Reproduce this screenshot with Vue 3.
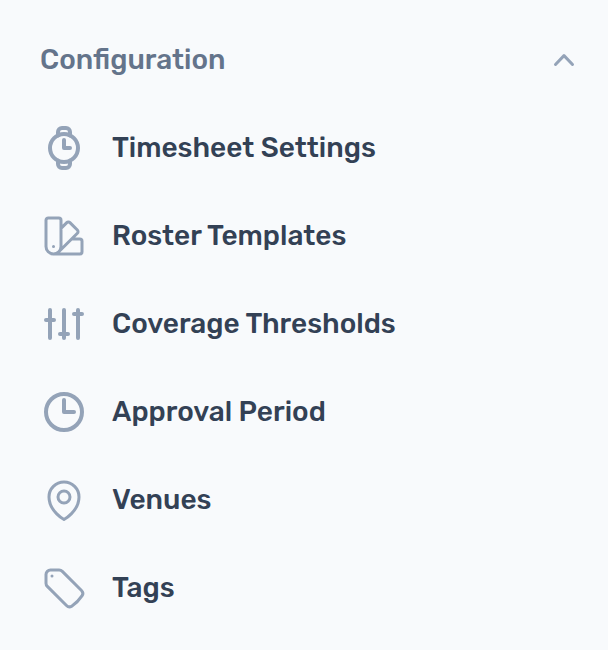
<script setup>
import { ref } from 'vue'

const open = ref(true)

const items = [
  {
    label: 'Timesheet Settings',
    stroke: 2,
    paths: [
      'M19 12a7 7 0 1 1-14 0 7 7 0 0 1 14 0Z',
      'M12 8v4h3',
      'M9 5.7V4a2 2 0 0 1 2-2h2a2 2 0 0 1 2 2v1.7',
      'M9 18.3V20a2 2 0 0 0 2 2h2a2 2 0 0 0 2-2v-1.7',
    ],
  },
  {
    label: 'Roster Templates',
    stroke: 1.5,
    paths: [
      'M4.098 19.902a3.75 3.75 0 0 0 5.304 0l6.401-6.402M6.75 21A3.75 3.75 0 0 1 3 17.25V4.125C3 3.504 3.504 3 4.125 3h5.25c.621 0 1.125.504 1.125 1.125v4.072M6.75 21a3.75 3.75 0 0 0 3.75-3.75V8.197M6.75 21h13.125c.621 0 1.125-.504 1.125-1.125v-5.25c0-.621-.504-1.125-1.125-1.125h-4.072M10.5 8.197l2.88-2.88c.438-.439 1.15-.439 1.59 0l3.712 3.713c.44.44.44 1.152 0 1.59l-2.879 2.88M6.75 17.25h.008v.008H6.75v-.008Z',
    ],
  },
  {
    label: 'Coverage Thresholds',
    stroke: 2,
    paths: ['M5 5v14M12 5v14M19 5v14', 'M3 10h4M10 17h4M17 7h4'],
  },
  {
    label: 'Approval Period',
    stroke: 2,
    paths: ['M21 12a9 9 0 1 1-18 0 9 9 0 0 1 18 0Z', 'M12 6v6h5'],
  },
  {
    label: 'Venues',
    stroke: 1.5,
    paths: [
      'M15 10.5a3 3 0 1 1-6 0 3 3 0 0 1 6 0Z',
      'M19.5 10.5c0 7.142-7.5 11.25-7.5 11.25S4.5 17.642 4.5 10.5a7.5 7.5 0 1 1 15 0Z',
    ],
  },
  {
    label: 'Tags',
    stroke: 1.5,
    paths: [
      'M9.568 3H5.25A2.25 2.25 0 0 0 3 5.25v4.318c0 .597.237 1.17.659 1.591l9.581 9.581c.699.699 1.78.872 2.607.33a18.095 18.095 0 0 0 5.223-5.223c.542-.827.369-1.908-.33-2.607L11.16 3.66A2.25 2.25 0 0 0 9.568 3Z',
      'M6 6h.008v.008H6V6Z',
    ],
  },
]
</script>

<template>
  <nav class="sidebar">
    <button class="heading" type="button" :aria-expanded="open" @click="open = !open">
      <span>Configuration</span>
      <svg class="chevron" :class="{ closed: !open }" viewBox="0 0 24 24">
        <path d="M3.5 16.5 12 7.6l8.5 8.9" />
      </svg>
    </button>
    <ul v-if="open" class="list">
      <li v-for="item in items" :key="item.label">
        <a class="item">
          <svg class="icon" viewBox="0 0 24 24" :stroke-width="item.stroke">
            <path v-for="d in item.paths" :key="d" :d="d" />
          </svg>
          <span class="label">{{ item.label }}</span>
        </a>
      </li>
    </ul>
  </nav>
</template>

<style>
body {
  background: #f8fafc;
}
</style>

<style scoped>
.sidebar {
  box-sizing: border-box;
  min-height: 650px;
  padding: 16px 32px 0 40px;
  background: #f8fafc;
  font-family: Rubik, Roboto, "Liberation Sans", sans-serif;
  font-size: 28px;
  font-weight: 500;
  line-height: 40px;
}

.heading {
  display: flex;
  align-items: center;
  justify-content: space-between;
  width: 100%;
  height: 88px;
  padding: 0;
  border: 0;
  background: none;
  color: #64748b;
  font: inherit;
  text-align: left;
  cursor: pointer;
}

.chevron {
  width: 24px;
  height: 24px;
  fill: none;
  stroke: #94a3b8;
  stroke-width: 3;
  stroke-linecap: round;
  stroke-linejoin: round;
}

.chevron.closed {
  transform: rotate(180deg);
}

.list {
  margin: 0;
  padding: 0;
  list-style: none;
}

.item {
  display: flex;
  align-items: center;
  gap: 24px;
  height: 88px;
  color: #334155;
}

.icon {
  flex: none;
  width: 48px;
  height: 48px;
  fill: none;
  stroke: #94a3b8;
  stroke-linecap: round;
  stroke-linejoin: round;
}

.label {
  white-space: nowrap;
}
</style>
